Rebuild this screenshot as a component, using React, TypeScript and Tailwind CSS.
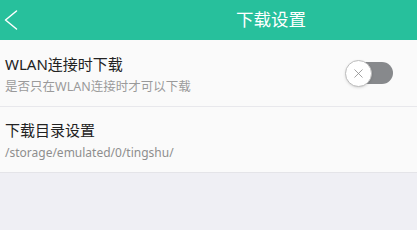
import { X } from 'lucide-react'

const font = { fontFamily: '"Noto Sans", "Noto Sans CJK SC", sans-serif' }

export default function App() {
  return (
    <div className="w-[417px] h-[230px] bg-[#efeff4] flex flex-col" style={font}>
      <header className="h-[40px] bg-[#27c09c] flex items-center text-white">
        <button className="w-[22px] h-[40px] flex items-center pl-[4px]">
          <svg width="14" height="22" viewBox="0 0 14 22" fill="none">
            <path d="M12.5 2 L1.5 11 L12.5 20" stroke="white" strokeWidth="1.5" strokeLinecap="round" strokeLinejoin="round" />
          </svg>
        </button>
        <h1 className="ml-[214px] text-[17.5px] leading-none">下载设置</h1>
      </header>

      <div className="bg-[#fafafa] border-b border-[#e4e4e8]">
        <div className="h-[67px] flex items-center justify-between px-[5px] border-b border-[#e8e8ec]">
          <div className="flex flex-col gap-[6px] pt-[2px]">
            <span className="text-[15px] leading-[20px] text-[#222]">WLAN连接时下载</span>
            <span className="text-[12.5px] leading-[14px] text-[#9a9a9a]">是否只在WLAN连接时才可以下载</span>
          </div>
          <div className="relative w-[48px] h-[27px] mr-[19px] flex items-center">
            <div className="absolute left-[8px] right-0 h-[22px] rounded-full bg-[#87898c]" />
            <div className="relative w-[27px] h-[27px] rounded-full bg-white border border-[#bcbcbc] flex items-center justify-center shadow-sm">
              <X className="w-[15px] h-[15px] text-[#8c8c8c]" strokeWidth={1.3} />
            </div>
          </div>
        </div>
        <div className="h-[65px] flex flex-col justify-center gap-[6px] px-[5px]">
          <span className="text-[15px] leading-[20px] text-[#222]">下载目录设置</span>
          <span className="text-[12px] leading-[14px] text-[#8e8e8e]">/storage/emulated/0/tingshu/</span>
        </div>
      </div>
    </div>
  )
}
